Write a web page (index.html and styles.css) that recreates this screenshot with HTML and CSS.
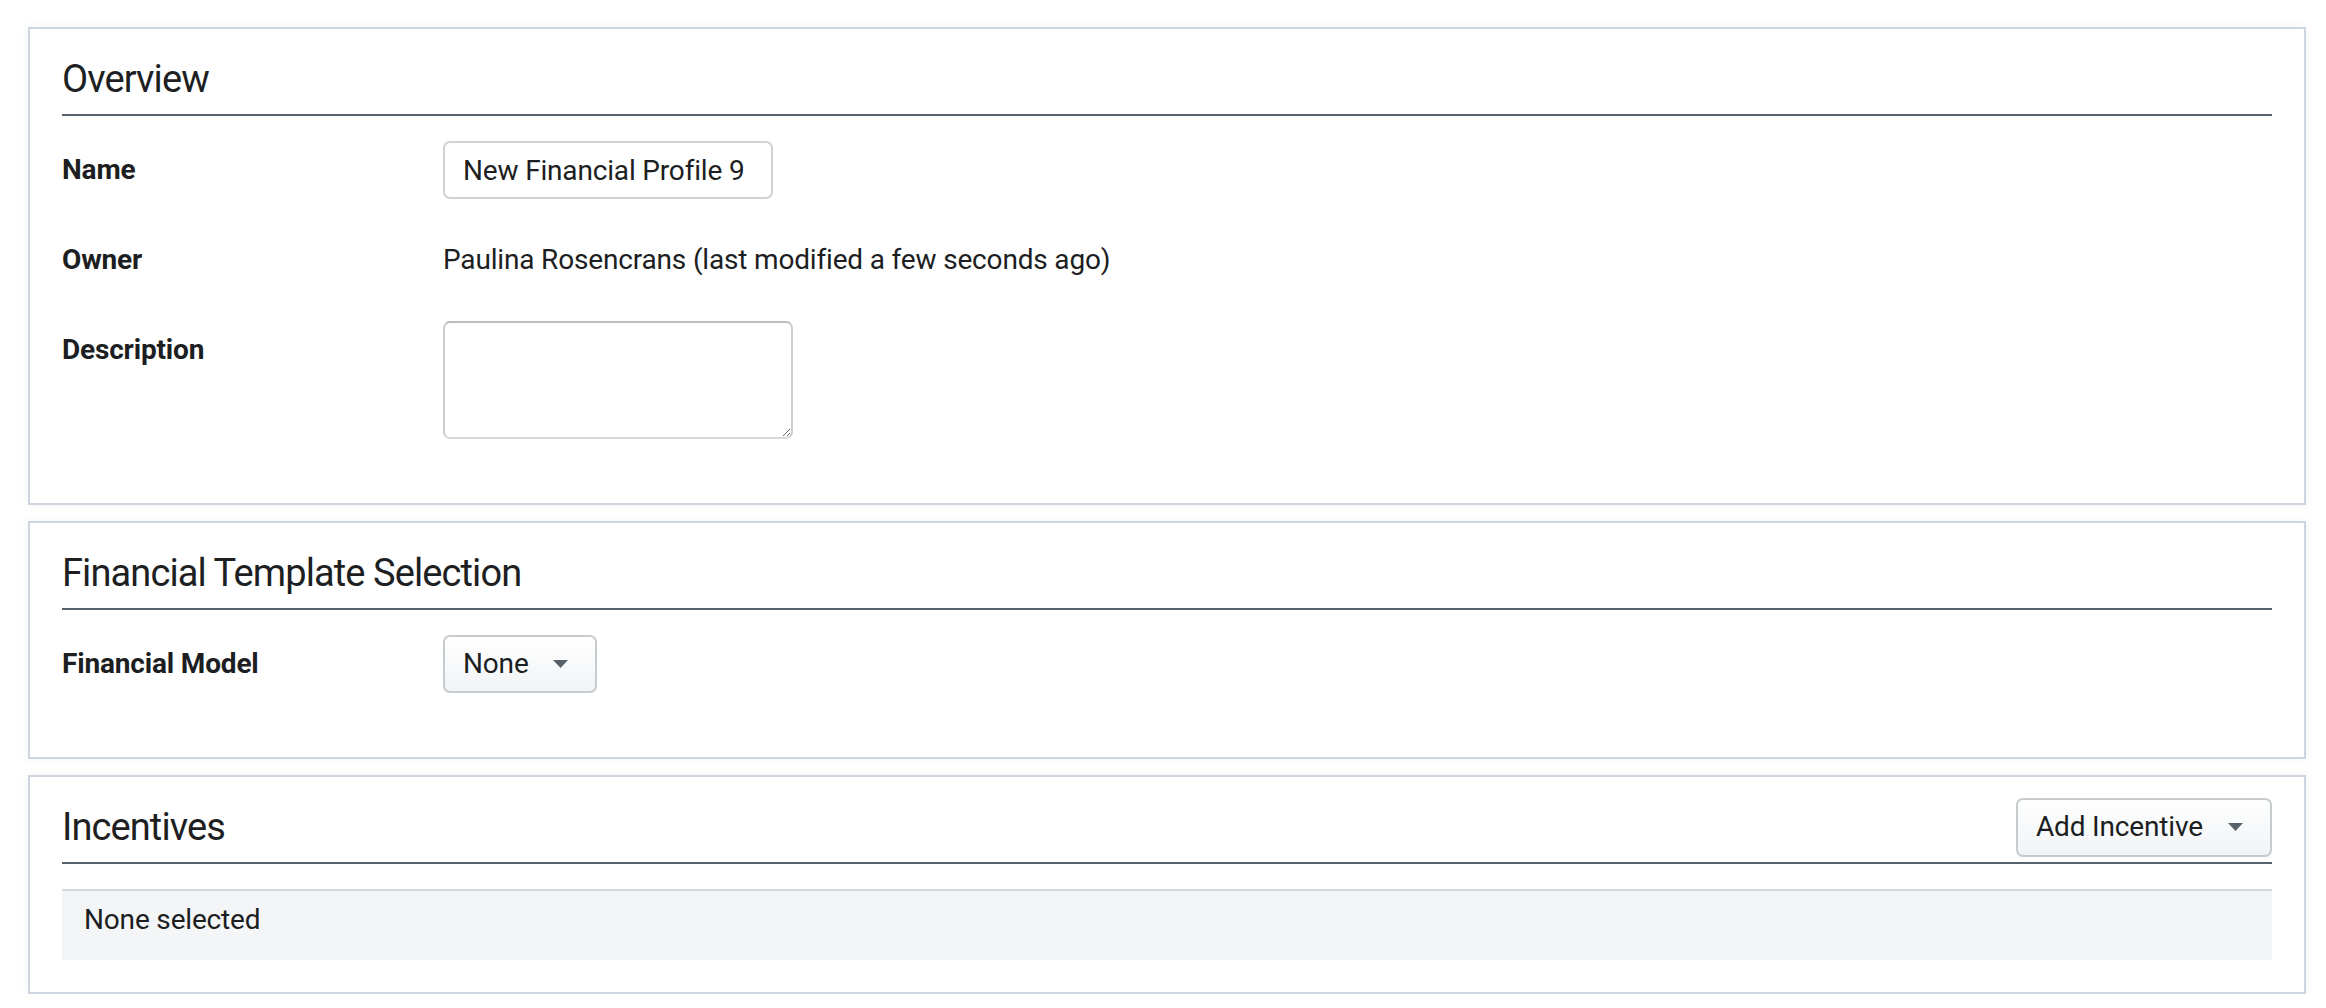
FILE: index.html
```html
<!DOCTYPE html>
<html lang="en">
<head>
  <meta charset="UTF-8">
  <title>Financial Profile</title>
  <link rel="stylesheet" href="styles.css">
</head>
<body>
  <main class="page">

    <section class="panel">
      <div class="panel-head">
        <h2>Overview</h2>
      </div>
      <div class="form-row">
        <label class="form-label" for="profileName">Name</label>
        <input class="text-input" id="profileName" type="text" value="New Financial Profile 9">
      </div>
      <div class="form-row">
        <span class="form-label">Owner</span>
        <span class="form-static">Paulina Rosencrans (last modified a few seconds ago)</span>
      </div>
      <div class="form-row">
        <label class="form-label" for="profileDesc">Description</label>
        <textarea class="text-area" id="profileDesc"></textarea>
      </div>
    </section>

    <section class="panel">
      <div class="panel-head">
        <h2>Financial Template Selection</h2>
      </div>
      <div class="form-row">
        <span class="form-label">Financial Model</span>
        <button class="dropdown" type="button">
          None
          <svg class="caret" width="15" height="8" viewBox="0 0 15 8"><path d="M0 0h15L7.5 8z"/></svg>
        </button>
      </div>
    </section>

    <section class="panel">
      <div class="panel-head">
        <h2>Incentives</h2>
        <button class="dropdown dropdown-wide" type="button">
          Add Incentive
          <svg class="caret" width="15" height="8" viewBox="0 0 15 8"><path d="M0 0h15L7.5 8z"/></svg>
        </button>
      </div>
      <div class="empty-list">None selected</div>
    </section>

  </main>
</body>
</html>
```

FILE: styles.css
```css
body {
  margin: 0;
  font-family: Roboto, "Liberation Sans", sans-serif;
  font-size: 28px;
  line-height: 40px;
  letter-spacing: -0.17px;
  color: #1c1e22;
  background-color: #ffffff;
}

.page {
  padding: 27px 20px 0 28px;
  display: flex;
  flex-direction: column;
  gap: 16px;
}

.panel {
  border: 2px solid #cdd6e0;
  background-color: #fff;
  padding: 28px 32px 32px;
  box-shadow: 0 0 10px rgba(0, 0, 0, 0.05);
}

.panel-head {
  display: flex;
  align-items: center;
  justify-content: space-between;
  padding-bottom: 13px;
  border-bottom: 2px solid #56636f;
  margin-bottom: 25px;
}

.panel-head h2 {
  margin: 0;
  font-size: 38px;
  line-height: 44px;
  font-weight: 400;
  letter-spacing: -0.9px;
  color: #1d1f23;
}

.form-row {
  display: flex;
  align-items: flex-start;
  margin-bottom: 32px;
}

.form-label {
  width: 381px;
  flex: none;
  padding: 9px 0;
  font-weight: 700;
}

.form-static {
  padding: 9px 0;
}

.text-input,
.text-area {
  box-sizing: border-box;
  margin: 0;
  font: inherit;
  letter-spacing: inherit;
  color: inherit;
  background: #fff;
  border: 2px solid #d2d2d2;
  border-radius: 7px;
}

.text-input {
  width: 330px;
  height: 58px;
  padding: 0 18px;
}

.text-area {
  width: 350px;
  height: 118px;
  padding: 8px 18px;
  border-color: #bdbdbd #cdcdcd #d8d8d8;
}

.dropdown {
  box-sizing: border-box;
  display: inline-flex;
  align-items: center;
  gap: 24px;
  height: 58px;
  margin: 0;
  padding: 0 27px 0 18px;
  font: inherit;
  letter-spacing: inherit;
  color: inherit;
  background: linear-gradient(#ffffff, #f1f3f5);
  border: 2px solid #c6cbd0;
  border-radius: 7px;
  cursor: pointer;
}

.dropdown-wide {
  min-width: 256px;
  height: 59px;
  margin: -8px 0;
  justify-content: space-between;
}

.caret {
  fill: #56616c;
  flex: none;
}

.empty-list {
  background-color: #f4f5f7;
  border-top: 2px solid #d4d7db;
  padding: 9px 22px 20px;
}
```
